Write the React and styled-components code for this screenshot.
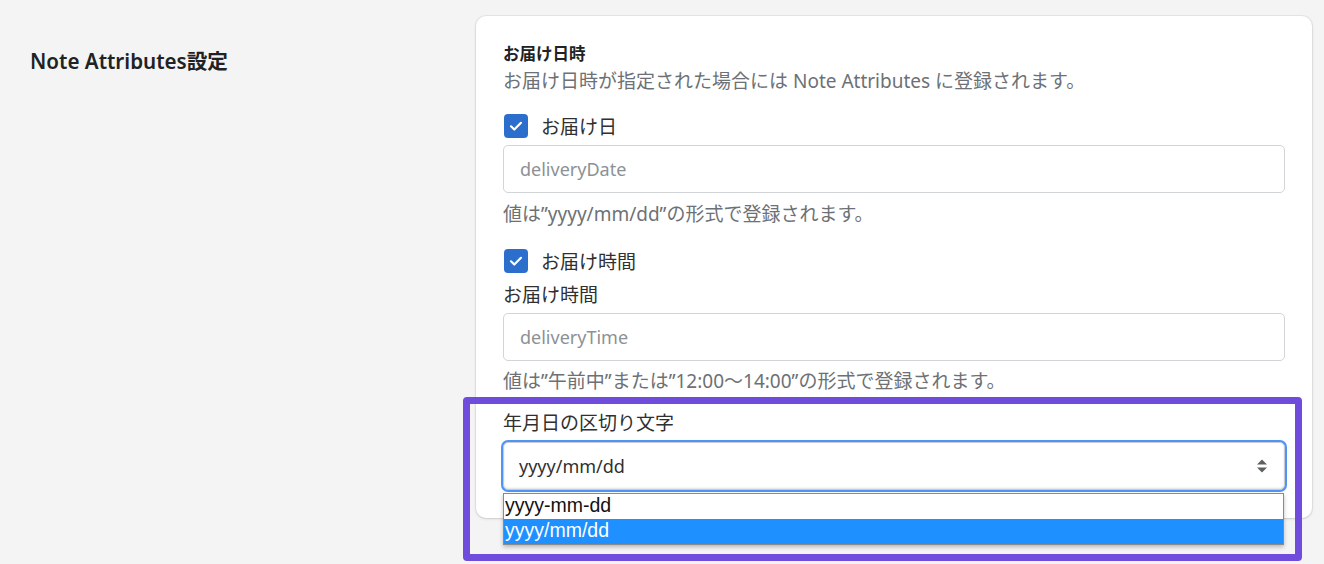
import React from "react";
import styled, { createGlobalStyle } from "styled-components";

const Global = createGlobalStyle`
  html, body { margin: 0; padding: 0; background: #f4f4f4; }
  body { font-family: "Noto Sans", "Noto Sans CJK JP", sans-serif; color: #202223; }
  * { box-sizing: border-box; }
`;

const Page = styled.div`
  display: flex;
  align-items: flex-start;
  padding-top: 16px;
  width: 1324px;
  height: 564px;
  overflow: hidden;
  position: relative;
`;

const Side = styled.div`
  width: 476px;
  flex-shrink: 0;
  padding: 31px 0 0 30px;
`;

const SideTitle = styled.h2`
  margin: 0;
  font-size: 20.6px;
  line-height: 28px;
  font-weight: 600;
  color: #202223;
`;

const Card = styled.div`
  width: 836px;
  background: #fff;
  border-radius: 10px;
  box-shadow: 0 0 0 1px rgba(0, 0, 0, 0.05), 0 1px 3px rgba(0, 0, 0, 0.12);
  padding: 27px 27px 28px 27px;
  display: flex;
  flex-direction: column;
`;

const Heading = styled.div`
  font-size: 16.5px;
  line-height: 22px;
  font-weight: 700;
  color: #202223;
`;

const Sub = styled.div`
  font-size: 19px;
  line-height: 28px;
  color: #6d7175;
  margin-top: ${(p) => p.$mt || 0}px;
`;

const CheckRow = styled.label`
  display: flex;
  align-items: center;
  gap: 13px;
  height: 24px;
  margin-top: ${(p) => p.$mt || 0}px;
  margin-left: 1px;
  font-size: 19px;
  color: #303030;
`;

const Box = styled.span`
  width: 24px;
  height: 24px;
  border-radius: 4px;
  background: #2c6ecb;
  display: flex;
  align-items: center;
  justify-content: center;
`;

const Label = styled.div`
  font-size: 19px;
  line-height: 28px;
  color: #303030;
  margin-top: ${(p) => p.$mt || 0}px;
`;

const Input = styled.input`
  height: 48px;
  width: 100%;
  border: 1px solid #d2d5d8;
  border-radius: 5px;
  padding: 0 16px;
  font-family: "Noto Sans", "Noto Sans CJK JP", sans-serif;
  font-size: 18px;
  color: #202223;
  margin-top: ${(p) => p.$mt || 0}px;
  outline: none;
  &::placeholder { color: #8c9196; }
`;

const SelectWrap = styled.div`
  position: relative;
  margin-top: 5px;
`;

const SelectBox = styled.div`
  height: 48px;
  border: 1px solid #c9cccf;
  border-radius: 5px;
  box-shadow: 0 0 0 2px #4f95f7, inset 0 -1px 2px rgba(0, 0, 0, 0.12);
  display: flex;
  align-items: center;
  justify-content: space-between;
  padding: 0 16px 0 15px;
  font-size: 18px;
  color: #303030;
  background: #fff;
`;

const Dropdown = styled.ul`
  position: absolute;
  left: 0;
  right: 1px;
  top: 51px;
  margin: 0;
  padding: 0;
  list-style: none;
  background: #fff;
  border: 1px solid #8a8a8a;
  box-shadow: 0 2px 4px rgba(0, 0, 0, 0.25);
  z-index: 2;
`;

const Option = styled.li`
  height: 25px;
  line-height: 23px;
  padding-left: 1px;
  font-family: "Liberation Sans", Arial, sans-serif;
  font-size: 19.5px;
  color: ${(p) => (p.$active ? "#fff" : "#111")};
  background: ${(p) => (p.$active ? "#1e90ff" : "#fff")};
`;

const Highlight = styled.div`
  position: absolute;
  left: 463px;
  top: 397px;
  width: 839px;
  height: 164px;
  border: 7px solid #6f4cdb;
  border-radius: 4px;
  pointer-events: none;
  z-index: 3;
`;

const Check = () => (
  <svg width="16" height="16" viewBox="0 0 16 16" fill="none">
    <path d="M3 8.3l3.3 3.2L13 4.8" stroke="#fff" strokeWidth="2.2" strokeLinecap="round" strokeLinejoin="round" />
  </svg>
);

const Arrows = () => (
  <svg width="12" height="16" viewBox="0 0 12 16">
    <path d="M1 6.5L6 1.5L11 6.5Z" fill="#5c5f62" />
    <path d="M1 9.5L6 14.5L11 9.5Z" fill="#5c5f62" />
  </svg>
);

export default function App() {
  return (
    <>
      <Global />
      <Page>
        <Side>
          <SideTitle>Note Attributes設定</SideTitle>
        </Side>
        <Card>
          <Heading>お届け日時</Heading>
          <Sub $mt={2}>お届け日時が指定された場合には Note Attributes に登録されます。</Sub>
          <CheckRow $mt={19}>
            <Box><Check /></Box>
            お届け日
          </CheckRow>
          <Input $mt={7} placeholder="deliveryDate" readOnly />
          <Sub $mt={7}>値は”yyyy/mm/dd”の形式で登録されます。</Sub>
          <CheckRow $mt={21}>
            <Box><Check /></Box>
            お届け時間
          </CheckRow>
          <Label $mt={8}>お届け時間</Label>
          <Input $mt={4} placeholder="deliveryTime" readOnly />
          <Sub $mt={6}>値は”午前中”または”12:00〜14:00”の形式で登録されます。</Sub>
          <Label $mt={14}>年月日の区切り文字</Label>
          <SelectWrap>
            <SelectBox>
              <span>yyyy/mm/dd</span>
              <Arrows />
            </SelectBox>
            <Dropdown>
              <Option>yyyy-mm-dd</Option>
              <Option $active>yyyy/mm/dd</Option>
            </Dropdown>
          </SelectWrap>
        </Card>
        <Highlight />
      </Page>
    </>
  );
}
